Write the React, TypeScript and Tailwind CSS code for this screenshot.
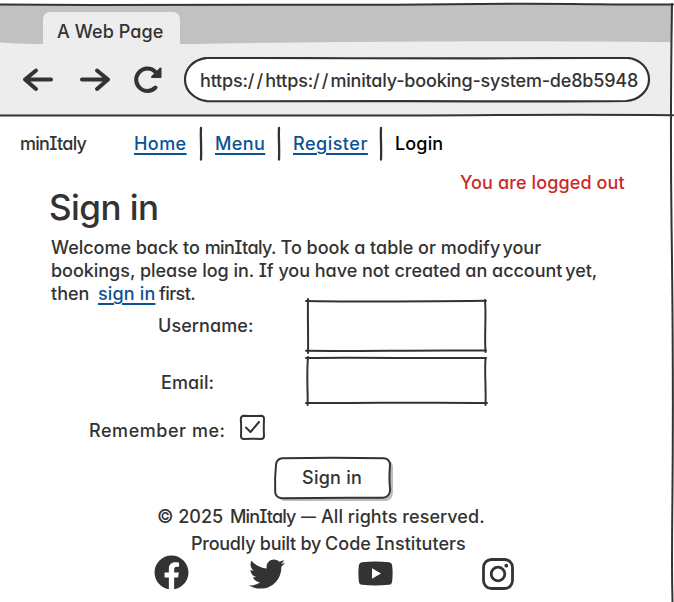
import React from "react";
import { FaFacebook, FaTwitter } from "react-icons/fa";

function ChromeLines() {
  return (
    <svg className="pointer-events-none absolute inset-0" width="674" height="602" viewBox="0 0 674 602" fill="none" stroke="#333333" strokeLinecap="round">
      <path d="M0 42.5 Q25 44 43 44.2 V45 H0Z M180 44.4 Q300 42 430 41.5 T671 42.3 V45 H180Z" fill="#ededed" stroke="none" />
      <path d="M0 4.6 C120 5.4 250 4.9 350 4.8 S480 3.3 570 4 S640 4.6 673 4.4" strokeWidth="2" />
      <path d="M0 115.5 C120 115.2 260 116 400 115.5 S560 114.2 673 115.2" strokeWidth="2" />
      <path d="M672 4 C670.8 80 670.5 150 671.6 230 S673.2 420 672.4 500 S672 570 672.5 602" strokeWidth="2" />
    </svg>
  );
}

function Divider() {
  return (
    <svg width="4" height="35" viewBox="0 0 4 35" className="shrink-0" fill="none">
      <path d="M2 2 C1.4 10 2.6 21 2 33.5" stroke="#333333" strokeWidth="2.3" strokeLinecap="round" />
    </svg>
  );
}

export default function App() {
  return (
    <div className="relative h-[602px] w-[674px] overflow-hidden bg-white font-['Inter','Noto_Sans',sans-serif] text-[18px] font-[450] leading-[23px] text-[#333333] [font-feature-settings:'cv11','cv08']">
      <header className="mr-[2px] mt-0 h-[116px] border-t-[4px] border-white bg-[#ededed]">
        <div className="flex h-[40px] bg-[#c1c1c1] pl-[43px] pt-[8px]">
          <div className="h-[32px] w-[137px] rounded-t-[7px] bg-[#ededed] pl-[14px]">
            <span className="block pt-[8px] tracking-[0.1px]">A Web Page</span>
          </div>
        </div>
        <div className="flex h-[72px] items-center pl-[22px]">
          <svg width="32" height="26" viewBox="0 0 32 26" fill="none" stroke="#333333" strokeWidth="4" strokeLinecap="round" strokeLinejoin="round">
            <path d="M29 12.5H3M14 3.5L3 12.5L14 22" />
          </svg>
          <svg className="ml-[25px]" width="32" height="26" viewBox="0 0 32 26" fill="none" stroke="#333333" strokeWidth="4" strokeLinecap="round" strokeLinejoin="round">
            <path d="M3 12.5H29M18 3.5L29 12.5L18 22" />
          </svg>
          <svg className="ml-[22px]" width="30" height="30" viewBox="0 0 30 30" fill="none">
            <path d="M22.5 22.5A11.2 11.2 0 1 1 22 6.5" stroke="#333333" strokeWidth="4" strokeLinecap="round" />
            <path d="M27.5 3.5V12H19Z" fill="#333333" stroke="#333333" strokeWidth="2" strokeLinejoin="round" />
          </svg>
          <div className="relative ml-[21px] h-[46px] w-[466px]">
            <svg className="absolute inset-0" width="466" height="46" viewBox="0 0 466 46" fill="none">
              <path d="M23 .8 C100 .5 220 2 300 1.4 S400 .8 443 .8 C456 1.5 465 11.5 465 22.5 S455 43.4 442 44 C360 45 290 44 200 44.2 S80 44.2 23 44.2 C10 42.5 1 33.5 1 22.5 S9 2.5 23 .8Z" fill="white" stroke="#333333" strokeWidth="2.2" />
            </svg>
            <span className="relative block whitespace-nowrap pl-[16px] pt-[12px] tracking-[-0.19px]">
              https:<span className="tracking-[2.1px]">//</span>https:<span className="tracking-[2.1px]">//</span>minitaly-booking-system-de8b5948
            </span>
          </div>
        </div>
      </header>

      <nav className="mt-[10px] flex h-[35px] items-center pl-[20px]">
        <span className="w-[114px] tracking-[-0.7px]">minItaly</span>
        <a className="w-[65px] text-[#0b5394]"><span className="tracking-[0.45px] underline decoration-2 underline-offset-[3px]">Home</span></a>
        <Divider />
        <a className="ml-[12px] w-[62px] text-[#0b5394]"><span className="tracking-[0.4px] underline decoration-2 underline-offset-[3px]">Menu</span></a>
        <Divider />
        <a className="ml-[12px] w-[86px] text-[#0b5394]"><span className="tracking-[0.5px] underline decoration-2 underline-offset-[3px]">Register</span></a>
        <Divider />
        <span className="ml-[12px] tracking-[0.15px] text-black">Login</span>
      </nav>

      <main>
        <p className="mt-[10px] pl-[460px] tracking-[0.12px] text-[#cc2929]">You are logged out</p>
        <h1 className="-mt-[8px] pl-[49px] text-[35px] font-[480] leading-[43px] tracking-[-0.55px]">Sign in</h1>
        <div className="mt-[7px] whitespace-nowrap pl-[51px]">
          <p className="tracking-[-0.02px]">Welcome back to <span className="tracking-[-0.6px]">minItaly.</span> To book a table or modify<span className="[word-spacing:-2.5px]"> your</span></p>
          <p className="tracking-[-0.03px]">bookings, please log in. If you have not created an account<span className="[word-spacing:-2px]"> yet,</span></p>
          <p className="flex">
            <span className="w-[47px]">then</span>
            <a className="w-[61px] tracking-[0.15px] text-[#0b5394]"><span className="underline decoration-2 underline-offset-[3px]">sign in</span></a>
            <span className="tracking-[-0.6px]">first.</span>
          </p>
        </div>
        <form className="-mt-[6px]">
          <div className="flex h-[54px] items-center pl-[158px]">
            <label className="-mt-[2px] w-[146px] tracking-[0.08px]">Username:</label>
            <svg width="184" height="56" viewBox="0 0 184 56" fill="none" stroke="#333333" strokeWidth="2" strokeLinecap="round">
              <path d="M2 3 C50 4 80 3.8 182 2.8" /><path d="M2 52.8 C60 53.4 120 51.8 182 52.6" />
              <path d="M4 1 C3.6 20 4.4 35 4 55" /><path d="M181 2 C182.4 20 180.3 35 181.5 54" />
            </svg>
          </div>
          <div className="flex h-[58px] items-center pl-[161px]">
            <label className="w-[143px] tracking-[0.1px]">Email:</label>
            <svg className="-mt-[2px]" width="184" height="52" viewBox="0 0 184 52" fill="none" stroke="#333333" strokeWidth="2" strokeLinecap="round">
              <path d="M2 3 C50 2 120 3.6 182 3" /><path d="M2 48 C60 48.4 120 47 183 48" />
              <path d="M4 2 C2.4 20 4 35 3.6 50" /><path d="M181.5 3 C180.4 20 182.3 35 181.5 50" />
            </svg>
          </div>
          <div className="flex h-[33px] items-center pl-[89px]">
            <label className="w-[150px] pt-[6px] tracking-[0.55px]">Remember me:</label>
            <svg width="27" height="27" viewBox="0 0 27 27" fill="none" stroke="#333333" strokeLinecap="round" strokeLinejoin="round">
              <path d="M5 1.8 Q13 2.4 22 1.8 Q25.2 2 25 5 Q24.6 14 25 22 Q25 25 22 25 Q13 24.5 5 25 Q1.8 25 2 22 Q2.4 13 1.8 5 Q1.8 2 5 1.8Z" strokeWidth="2" />
              <path d="M7 13.5L11.5 18L20 8" strokeWidth="2" />
            </svg>
          </div>
          <div className="mt-[11px] pl-[273px]">
            <button type="button" className="relative block h-[48px] w-[122px]">
              <svg className="absolute inset-0" width="122" height="48" viewBox="0 0 122 48" fill="none">
                <path d="M11 5H113Q120 6 120 12V38Q119 46 112 46H12Q5 45 5 38V12Q5 6 11 5Z" fill="#bdbdbd" />
                <path d="M9 3.2 Q60 2.4 111 3.2 Q117 4 117 10 Q115.8 24 117.2 35 Q116.5 42 110 42.8 Q60 42.4 9 43.2 Q2.5 42.5 2.2 37 Q1.6 23 3 10 Q3.4 4 9 3.2Z" fill="white" stroke="#333333" strokeWidth="2" />
              </svg>
              <span className="relative block -mt-[3px] pl-[29px] text-left tracking-[0.25px]">Sign in</span>
            </button>
          </div>
        </form>
      </main>

      <footer className="whitespace-nowrap">
        <p className="mt-[2px] flex pl-[157px]">
          <span className="w-[73px]">© 2025</span>
          <span className="w-[71px] tracking-[-0.85px]">MinItaly</span>
          <span className="w-[20px] text-[15px]">—</span>
          <span className="tracking-[0.05px]">All rights reserved.</span>
        </p>
        <p className="mt-[4px] flex pl-[191px]">
          <span className="w-[134px] tracking-[-0.25px]">Proudly built by</span>
          <span className="tracking-[0.05px]">Code Instituters</span>
        </p>
        <div className="flex h-[37px] items-center pl-[154px]">
          <FaFacebook className="-mt-[2px]" size={35} />
          <FaTwitter className="ml-[60px]" size={36} />
          <svg className="ml-[73px]" width="35" height="25" viewBox="0 0 35 25">
            <path d="M4 1.2 Q17 -.4 31 1.2 Q34 1.8 34.2 5 Q35 12 34.2 20 Q34 23.4 31 23.8 Q17 25.2 4 23.8 Q1 23.4 .8 20 Q0 12 .8 5 Q1 1.8 4 1.2Z" fill="#333333" />
            <path d="M14 7.2L23 12.5L14 17.8Z" fill="white" />
          </svg>
          <svg className="ml-[89px]" width="32" height="32" viewBox="0 0 32 32" fill="none" stroke="#333333">
            <rect x="1.5" y="1.5" width="29" height="29" rx="8" strokeWidth="2.8" />
            <circle cx="16" cy="16" r="6.8" strokeWidth="2.8" />
            <circle cx="24.3" cy="7.7" r="1.9" fill="#333333" stroke="none" />
          </svg>
        </div>
      </footer>
      <ChromeLines />
    </div>
  );
}
